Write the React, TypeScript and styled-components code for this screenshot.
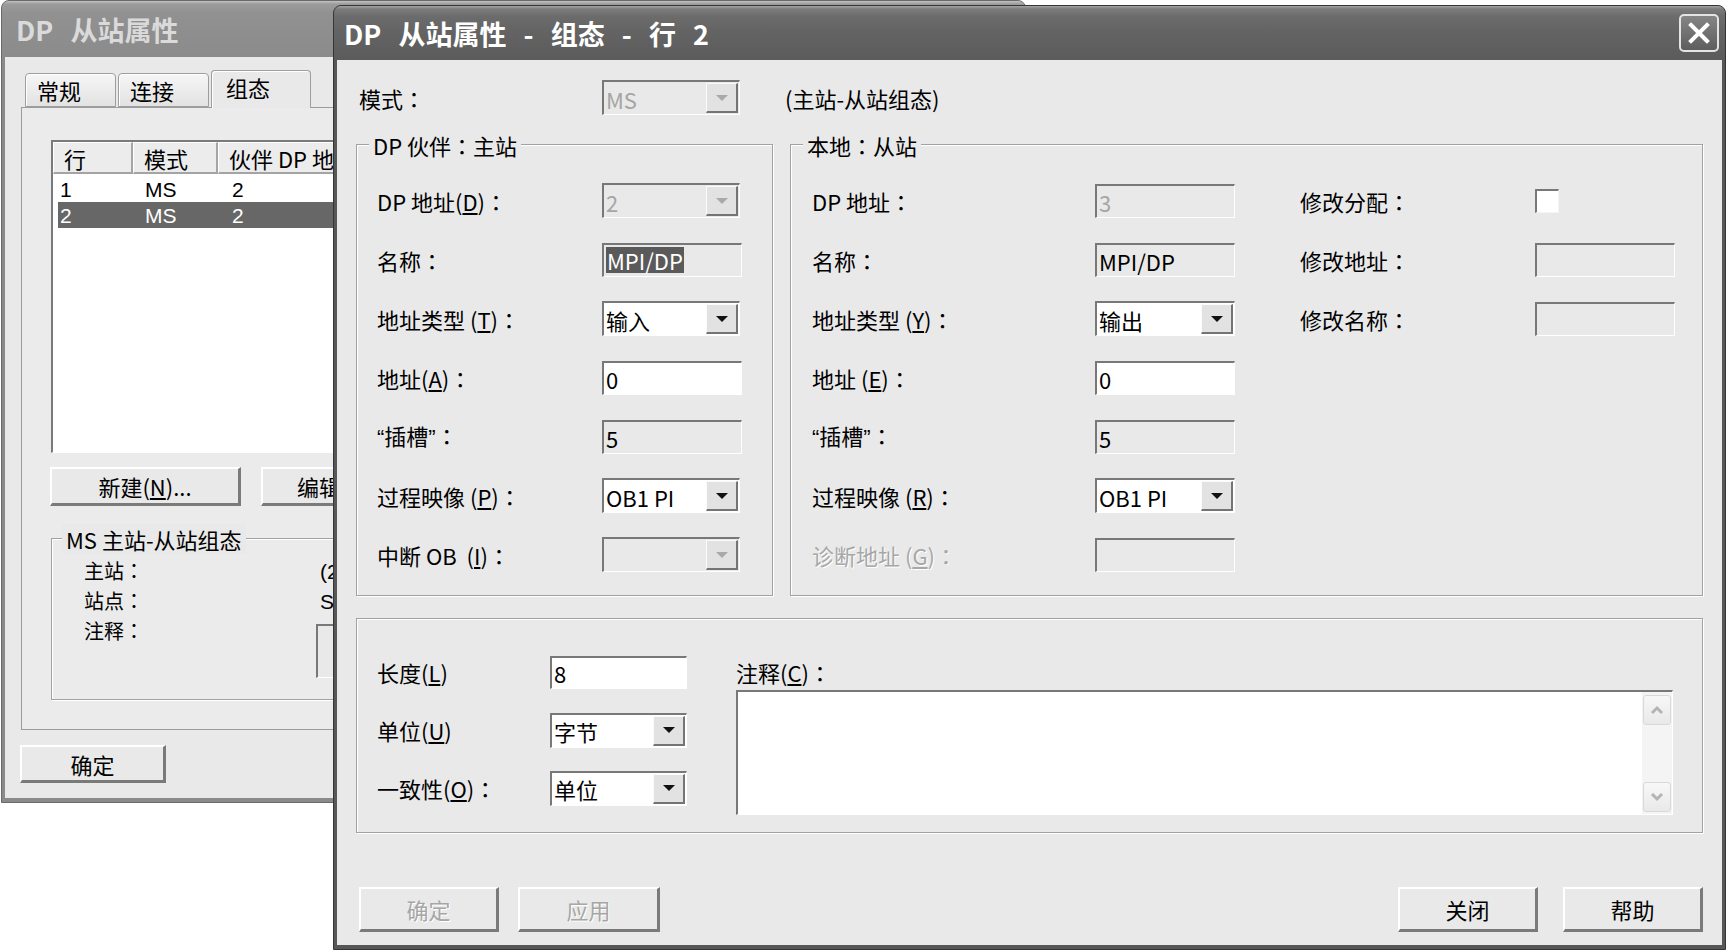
import React from "react";
import styled, { createGlobalStyle } from "styled-components";

const FONT = `"Noto Sans CJK SC", "Noto Sans", "Liberation Sans", sans-serif`;
const FACE = "#e9e9e9";

const GlobalStyle = createGlobalStyle`
  html, body { margin: 0; padding: 0; background: #ffffff; }
  body { font-family: ${FONT}; font-size: 22px; color: #000; font-kerning: none; }
  * { box-sizing: border-box; }
`;

const Desktop = styled.div`
  position: relative;
  width: 1729px;
  height: 952px;
  overflow: hidden;
  background: #ffffff;
`;

const Window = styled.div<{ $x: number; $y: number; $w: number; $h: number; $active?: boolean }>`
  position: absolute;
  left: ${(p) => p.$x}px;
  top: ${(p) => p.$y}px;
  width: ${(p) => p.$w}px;
  height: ${(p) => p.$h}px;
  display: flex;
  flex-direction: column;
  background: ${(p) => (p.$active ? "#575757" : "#8a8a8a")};
  border: 1px solid ${(p) => (p.$active ? "#353535" : "#6a6a6a")};
  border-radius: 8px 8px 0 0;
  overflow: hidden;
`;

const TitleBar = styled.div<{ $active?: boolean; $h: number }>`
  flex: none;
  height: ${(p) => p.$h}px;
  display: flex;
  align-items: center;
  justify-content: space-between;
  padding: 0 6px 0 ${(p) => (p.$active ? 10 : 14)}px;
  background: ${(p) =>
    p.$active
      ? "linear-gradient(180deg, #a4a4a4 0px, #7c7c7c 3px, #6c6c6c 10px, #646464 45%, #5b5b5b 100%)"
      : "linear-gradient(180deg, #c2c2c2 0px, #9c9c9c 3px, #919191 12px, #8b8b8b 100%)"};
`;

const TitleText = styled.span<{ $active?: boolean }>`
  font-family: ${FONT};
  font-size: 27px;
  font-weight: 700;
  line-height: 1;
  color: ${(p) => (p.$active ? "#ffffff" : "#dadada")};
  word-spacing: 11px;
  white-space: pre;
`;

const CloseButton = styled.div`
  width: 40px;
  height: 38px;
  border: 2px solid #e4e4e4;
  border-radius: 5px;
  background: linear-gradient(180deg, #858585, #5e5e5e);
  display: flex;
  align-items: center;
  justify-content: center;
`;

/* ---------- common text pieces ---------- */

const Label = styled.span<{ $dim?: boolean }>`
  font-size: 22px;
  line-height: 1;
  white-space: pre;
  font-kerning: none;
  color: ${(p) => (p.$dim ? "#a7a7a7" : "#000")};
  text-shadow: ${(p) => (p.$dim ? "1px 1px 0 #ffffff" : "none")};
`;

const Key = styled.span`
  text-decoration: underline;
  text-underline-offset: 2px;
`;

/* full-width colon centred in its em box, as in the bitmap font */
const Colon = styled.span`
  font-family: "Noto Sans CJK TC", "Noto Sans CJK SC", sans-serif;
`;

/* compact curly quotes */
const Quote = styled.span`
  font-family: "Liberation Sans", sans-serif;
`;

const C = () => <Colon>：</Colon>;

/* ---------- controls ---------- */

const Field = styled.div<{ $w: number; $h?: number; $bg?: string; $dim?: boolean }>`
  flex: none;
  width: ${(p) => p.$w}px;
  height: ${(p) => p.$h ?? 34}px;
  display: flex;
  align-items: center;
  border-style: solid;
  border-width: 2px 1px 1px 2px;
  border-color: #787878 #ffffff #ffffff #787878;
  background: ${(p) => p.$bg ?? "#ffffff"};
  color: ${(p) => (p.$dim ? "#a5a5a5" : "#000")};
  font-size: 22px;
  line-height: 1;
  padding-left: 2px;
  overflow: hidden;
  white-space: pre;
`;

const FieldText = styled.span`
  padding-top: 1px;
`;

const SelText = styled.span`
  background: #5a5a5a;
  color: #ffffff;
  line-height: 26px;
  padding: 0 1px;
`;

const DropButton = styled.span<{ $dim?: boolean }>`
  align-self: stretch;
  width: 32px;
  margin: 1px 1px 1px auto;
  display: flex;
  align-items: center;
  justify-content: center;
  background: #e2e2e2;
  border-style: solid;
  border-width: 1px 2px 2px 1px;
  border-color: #fbfbfb #747474 #747474 #fbfbfb;
  &::after {
    content: "";
    border-left: 6px solid transparent;
    border-right: 6px solid transparent;
    border-top: 6px solid ${(p) => (p.$dim ? "#a9a9a9" : "#111111")};
  }
`;

const CheckBox = styled.span`
  display: block;
  width: 24px;
  height: 24px;
  background: #ffffff;
  border-style: solid;
  border-width: 2px 1px 1px 2px;
  border-color: #787878 #f4f4f4 #f4f4f4 #787878;
`;

const PushButton = styled.div<{ $w: number; $h: number; $dim?: boolean; $textLeft?: number }>`
  flex: none;
  width: ${(p) => p.$w}px;
  height: ${(p) => p.$h}px;
  display: flex;
  align-items: center;
  justify-content: ${(p) => (p.$textLeft !== undefined ? "flex-start" : "center")};
  padding-left: ${(p) => p.$textLeft ?? 0}px;
  background: ${FACE};
  border-style: solid;
  border-width: 2px 3px 3px 2px;
  border-color: #ffffff #7a7a7a #7a7a7a #ffffff;
  font-size: 22px;
  line-height: 1;
  white-space: pre;
  color: ${(p) => (p.$dim ? "#a6a6a6" : "#000")};
  text-shadow: ${(p) => (p.$dim ? "1px 1px 0 #ffffff" : "none")};
`;

const GroupBox = styled.div<{ $w: number; $h: number }>`
  position: relative;
  flex: none;
  width: ${(p) => p.$w}px;
  height: ${(p) => p.$h}px;
  border: 1px solid #a2a2a2;
  box-shadow: inset 1px 1px 0 #ffffff, 1px 1px 0 #ffffff;
`;

const GroupLabel = styled.span<{ $left: number }>`
  position: absolute;
  top: -15px;
  left: ${(p) => p.$left}px;
  padding: 0 4px;
  background: ${FACE};
  font-size: 22px;
  line-height: 30px;
  white-space: pre;
`;

function Combo({ value, w = 138, dim }: { value?: string; w?: number; dim?: boolean }) {
  return (
    <Field $w={w} $h={35} $bg={dim ? FACE : "#ffffff"} $dim={dim}>
      <FieldText>{value ?? ""}</FieldText>
      <DropButton $dim={dim} />
    </Field>
  );
}

function TextBox({
  value,
  w = 140,
  h = 34,
  gray,
  dim,
  selected,
}: {
  value?: string;
  w?: number;
  h?: number;
  gray?: boolean;
  dim?: boolean;
  selected?: boolean;
}) {
  return (
    <Field $w={w} $h={h} $bg={gray || dim ? FACE : "#ffffff"} $dim={dim}>
      {selected ? <SelText>{value}</SelText> : <FieldText>{value ?? ""}</FieldText>}
    </Field>
  );
}

/* ---------- back window ---------- */

const BackBody = styled.div`
  flex: 1;
  margin: 0 3px 4px 3px;
  background: ${FACE};
  padding: 13px 0 0 16px;
  display: flex;
  flex-direction: column;
  align-items: flex-start;
`;

const TabStrip = styled.div`
  display: flex;
  align-items: flex-end;
  height: 38px;
  padding-left: 4px;
  margin-bottom: -1px;
  position: relative;
  z-index: 1;
`;

const Tab = styled.div<{ $w: number; $selected?: boolean }>`
  width: ${(p) => p.$w}px;
  height: ${(p) => (p.$selected ? 38 : 34)}px;
  margin-bottom: ${(p) => (p.$selected ? 0 : 1)}px;
  margin-right: 2px;
  border: 1px solid #9e9e9e;
  border-bottom: ${(p) => (p.$selected ? "none" : "1px solid #9e9e9e")};
  border-radius: 4px 4px 0 0;
  background: ${(p) => (p.$selected ? FACE : "linear-gradient(180deg, #f6f6f6, #e2e2e2)")};
  box-shadow: inset 1px 1px 0 #ffffff;
  display: flex;
  align-items: ${(p) => (p.$selected ? "flex-start" : "center")};
  padding: ${(p) => (p.$selected ? "5px 0 0 14px" : "0 0 0 11px")};
  font-size: 22px;
  line-height: 1;
`;

const TabPanel = styled.div`
  width: 990px;
  border: 1px solid #9c9c9c;
  background: #ebebeb;
  padding: 32px 0 29px 29px;
  display: flex;
  flex-direction: column;
  align-items: flex-start;
`;

const ListBox = styled.div`
  width: 940px;
  height: 313px;
  background: #ffffff;
  border-style: solid;
  border-width: 2px 1px 1px 2px;
  border-color: #7a7a7a #ffffff #ffffff #7a7a7a;
  display: flex;
  flex-direction: column;
`;

const ListHeader = styled.div`
  display: flex;
  height: 32px;
  flex: none;
`;

const HeaderCell = styled.div<{ $w?: number }>`
  flex: ${(p) => (p.$w ? "none" : "1")};
  width: ${(p) => (p.$w ? `${p.$w}px` : "auto")};
  height: 100%;
  background: #ececec;
  border-style: solid;
  border-width: 1px 2px 2px 1px;
  border-color: #ffffff #a4a4a4 #a4a4a4 #ffffff;
  display: flex;
  align-items: center;
  padding-left: 10px;
  font-size: 22px;
  line-height: 1;
  white-space: pre;
`;

const ListRow = styled.div<{ $selected?: boolean; $first?: boolean }>`
  display: flex;
  align-items: center;
  height: 26px;
  margin: ${(p) => (p.$first ? 2 : 0)}px 0 0 5px;
  background: ${(p) => (p.$selected ? "#676767" : "transparent")};
  color: ${(p) => (p.$selected ? "#ffffff" : "#000")};
`;

const RowCell = styled.span<{ $w: number; $pl: number }>`
  width: ${(p) => p.$w}px;
  padding-left: ${(p) => p.$pl}px;
  white-space: pre;
  font-family: "Liberation Sans", sans-serif;
  font-size: 21px;
  line-height: 1;
`;

const ButtonRow = styled.div<{ $gap: number }>`
  display: flex;
  gap: ${(p) => p.$gap}px;
`;

const BackButtons = styled(ButtonRow)`
  margin: 14px 0 0 -1px;
`;

const BackGroup = styled(GroupBox)`
  margin-top: 32px;
`;

const InfoGrid = styled.div`
  display: grid;
  grid-template-columns: 232px 1fr;
  grid-auto-rows: 30px;
  padding: 17px 0 0 32px;
  align-items: center;
`;

const InfoLabel = styled(Label)`
  font-size: 20px;
`;

const InfoValue = styled.span`
  font-family: "Liberation Sans", sans-serif;
  font-size: 21px;
  line-height: 1;
  white-space: pre;
  padding-left: 4px;
`;

const NoteLabel = styled(InfoLabel)`
  align-self: start;
  line-height: 30px;
`;

const NoteBox = styled(Field)`
  align-self: start;
  margin-top: 8px;
`;

const BackOk = styled(PushButton)`
  margin: 15px 0 0 -1px;
`;

/* ---------- front dialog ---------- */

const DialogBody = styled.div`
  flex: 1;
  margin: 0 3px 4px 3px;
  background: ${FACE};
  padding: 0 19px 13px 19px;
  display: flex;
  flex-direction: column;
`;

const ModeRow = styled.div`
  display: flex;
  align-items: center;
  height: 35px;
  margin-top: 20px;
  padding-left: 3px;
`;

const ModeLabel = styled(Label)`
  width: 243px;
`;

const ModeNote = styled(Label)`
  margin-left: 45px;
`;

const GroupsRow = styled.div`
  display: flex;
  gap: 17px;
  margin-top: 29px;
`;

const FormGrid = styled.div<{ $cols: string }>`
  display: grid;
  grid-template-columns: ${(p) => p.$cols};
  grid-auto-rows: 35px;
  row-gap: 24px;
  align-items: center;
  align-content: start;
`;

const LeftForm = styled(FormGrid)`
  padding: 38px 0 0 20px;
`;

const RightInner = styled.div`
  display: flex;
  gap: 65px;
  padding: 38px 0 0 21px;
`;

const BottomGroup = styled(GroupBox)`
  margin-top: 22px;
  display: flex;
  gap: 49px;
  padding: 36px 0 0 20px;
`;

const BottomForm = styled(FormGrid)`
  grid-auto-rows: 34px;
`;

const CommentCol = styled.div`
  display: flex;
  flex-direction: column;
`;

const CommentLabel = styled(Label)`
  height: 34px;
  display: flex;
  align-items: center;
`;

const TextArea = styled(Field)`
  margin-top: 1px;
  align-items: stretch;
  padding: 0;
`;

const ScrollBar = styled.div`
  margin-left: auto;
  width: 30px;
  background: #f4f4f4;
  display: flex;
  flex-direction: column;
  justify-content: space-between;
  padding: 3px 1px 2px 1px;
`;

const ScrollBtn = styled.div`
  width: 28px;
  height: 30px;
  border: 1px solid #d8d8d8;
  border-radius: 3px;
  background: linear-gradient(180deg, #f7f7f7, #e9e9e9);
  display: flex;
  align-items: center;
  justify-content: center;
`;

const FooterRow = styled.div`
  display: flex;
  align-items: center;
  margin-top: 54px;
  padding-left: 3px;
`;

const FooterLeft = styled(ButtonRow)``;

const FooterRight = styled(ButtonRow)`
  margin-left: auto;
`;

function Chevron({ up }: { up?: boolean }) {
  return (
    <svg width="14" height="10" viewBox="0 0 14 10">
      <path
        d={up ? "M2 8 L7 3 L12 8" : "M2 2 L7 7 L12 2"}
        fill="none"
        stroke="#b4b4b4"
        strokeWidth="3"
        strokeLinejoin="miter"
      />
    </svg>
  );
}

export default function App() {
  const leftRows: { label: React.ReactNode; control: React.ReactNode }[] = [
    { label: <>DP 地址(<Key>D</Key>)<C /></>, control: <Combo value="2" dim /> },
    { label: <>名称<C /></>, control: <TextBox value="MPI/DP" gray selected /> },
    { label: <>地址类型 (<Key>T</Key>)<C /></>, control: <Combo value="输入" /> },
    { label: <>地址(<Key>A</Key>)<C /></>, control: <TextBox value="0" /> },
    { label: <><Quote>“</Quote>插槽<Quote>”</Quote><C /></>, control: <TextBox value="5" gray /> },
    { label: <>过程映像 (<Key>P</Key>)<C /></>, control: <Combo value="OB1 PI" /> },
    { label: <>中断 OB  (<Key>I</Key>)<C /></>, control: <Combo dim /> },
  ];

  const rightRows: { label: React.ReactNode; control: React.ReactNode; dim?: boolean }[] = [
    { label: <>DP 地址<C /></>, control: <TextBox value="3" dim /> },
    { label: <>名称<C /></>, control: <TextBox value="MPI/DP" gray /> },
    { label: <>地址类型 (<Key>Y</Key>)<C /></>, control: <Combo value="输出" w={140} /> },
    { label: <>地址 (<Key>E</Key>)<C /></>, control: <TextBox value="0" /> },
    { label: <><Quote>“</Quote>插槽<Quote>”</Quote><C /></>, control: <TextBox value="5" gray /> },
    { label: <>过程映像 (<Key>R</Key>)<C /></>, control: <Combo value="OB1 PI" w={140} /> },
    { label: <>诊断地址 (<Key>G</Key>)<C /></>, control: <TextBox dim />, dim: true },
  ];

  const extraRows: { label: string; control: React.ReactNode }[] = [
    { label: "修改分配", control: <CheckBox /> },
    { label: "修改地址", control: <TextBox dim /> },
    { label: "修改名称", control: <TextBox dim /> },
  ];

  return (
    <Desktop>
      <GlobalStyle />

      {/* background window */}
      <Window $x={1} $y={0} $w={1025} $h={803}>
        <TitleBar $h={56}>
          <TitleText>DP 从站属性</TitleText>
        </TitleBar>
        <BackBody>
          <TabStrip>
            <Tab $w={91}>常规</Tab>
            <Tab $w={91}>连接</Tab>
            <Tab $w={100} $selected>
              组态
            </Tab>
          </TabStrip>
          <TabPanel>
            <ListBox>
              <ListHeader>
                <HeaderCell $w={80}>行</HeaderCell>
                <HeaderCell $w={85}>模式</HeaderCell>
                <HeaderCell>伙伴 DP 地址</HeaderCell>
              </ListHeader>
              <ListRow $first>
                <RowCell $w={75} $pl={2}>1</RowCell>
                <RowCell $w={85} $pl={12}>MS</RowCell>
                <RowCell $w={100} $pl={14}>2</RowCell>
              </ListRow>
              <ListRow $selected>
                <RowCell $w={75} $pl={2}>2</RowCell>
                <RowCell $w={85} $pl={12}>MS</RowCell>
                <RowCell $w={100} $pl={14}>2</RowCell>
              </ListRow>
            </ListBox>
            <BackButtons $gap={20}>
              <PushButton $w={191} $h={39}>
                新建(<Key>N</Key>)...
              </PushButton>
              <PushButton $w={191} $h={39} $textLeft={34}>
                编辑
              </PushButton>
            </BackButtons>
            <BackGroup $w={940} $h={162}>
              <GroupLabel $left={10}>MS 主站-从站组态</GroupLabel>
              <InfoGrid>
                <InfoLabel>主站<C /></InfoLabel>
                <InfoValue>(2)</InfoValue>
                <InfoLabel>站点<C /></InfoLabel>
                <InfoValue>SI</InfoValue>
                <NoteLabel>注释<C /></NoteLabel>
                <NoteBox $w={400} $h={54} $bg={FACE} />
              </InfoGrid>
            </BackGroup>
          </TabPanel>
          <BackOk $w={146} $h={38}>
            确定
          </BackOk>
        </BackBody>
      </Window>

      {/* front dialog */}
      <Window $x={333} $y={5} $w={1393} $h={945} $active>
        <TitleBar $h={54} $active>
          <TitleText $active>DP 从站属性 - 组态 - 行 2</TitleText>
          <CloseButton>
            <svg width="24" height="24" viewBox="0 0 24 24">
              <path d="M4 4 L20 20 M20 4 L4 20" stroke="#ffffff" strokeWidth="4" strokeLinecap="square" />
            </svg>
          </CloseButton>
        </TitleBar>
        <DialogBody>
          <ModeRow>
            <ModeLabel>模式<C /></ModeLabel>
            <Combo value="MS" dim />
            <ModeNote>(主站-从站组态)</ModeNote>
          </ModeRow>

          <GroupsRow>
            <GroupBox $w={417} $h={452}>
              <GroupLabel $left={12}>DP 伙伴<C />主站</GroupLabel>
              <LeftForm $cols="225px 140px">
                {leftRows.map((r, i) => (
                  <React.Fragment key={i}>
                    <Label>{r.label}</Label>
                    {r.control}
                  </React.Fragment>
                ))}
              </LeftForm>
            </GroupBox>
            <GroupBox $w={913} $h={452}>
              <GroupLabel $left={12}>本地<C />从站</GroupLabel>
              <RightInner>
                <FormGrid $cols="283px 140px">
                  {rightRows.map((r, i) => (
                    <React.Fragment key={i}>
                      <Label $dim={r.dim}>{r.label}</Label>
                      {r.control}
                    </React.Fragment>
                  ))}
                </FormGrid>
                <FormGrid $cols="235px 140px">
                  {extraRows.map((r, i) => (
                    <React.Fragment key={i}>
                      <Label>
                        {r.label}
                        <C />
                      </Label>
                      {r.control}
                    </React.Fragment>
                  ))}
                </FormGrid>
              </RightInner>
            </GroupBox>
          </GroupsRow>

          <BottomGroup $w={1347} $h={215}>
            <BottomForm $cols="173px 137px">
              <Label>
                长度(<Key>L</Key>)
              </Label>
              <TextBox value="8" w={137} h={33} />
              <Label>
                单位(<Key>U</Key>)
              </Label>
              <Combo value="字节" w={137} />
              <Label>
                一致性(<Key>O</Key>)<C />
              </Label>
              <Combo value="单位" w={137} />
            </BottomForm>
            <CommentCol>
              <CommentLabel>
                注释(<Key>C</Key>)<C />
              </CommentLabel>
              <TextArea $w={937} $h={125}>
                <ScrollBar>
                  <ScrollBtn>
                    <Chevron up />
                  </ScrollBtn>
                  <ScrollBtn>
                    <Chevron />
                  </ScrollBtn>
                </ScrollBar>
              </TextArea>
            </CommentCol>
          </BottomGroup>

          <FooterRow>
            <FooterLeft $gap={19}>
              <PushButton $w={140} $h={45} $dim>
                确定
              </PushButton>
              <PushButton $w={142} $h={45} $dim>
                应用
              </PushButton>
            </FooterLeft>
            <FooterRight $gap={25}>
              <PushButton $w={140} $h={45}>
                关闭
              </PushButton>
              <PushButton $w={140} $h={45}>
                帮助
              </PushButton>
            </FooterRight>
          </FooterRow>
        </DialogBody>
      </Window>
    </Desktop>
  );
}
